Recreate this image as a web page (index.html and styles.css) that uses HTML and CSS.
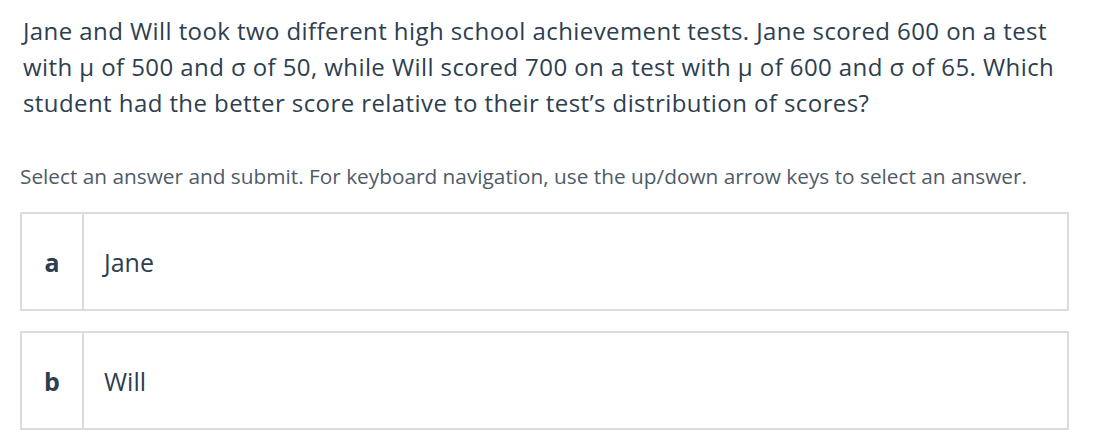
FILE: index.html
```html
<!DOCTYPE html>
<html>
<head>
<meta charset="utf-8">
<link rel="stylesheet" href="styles.css">
</head>
<body>
<div class="page">
  <p class="question">Jane and Will took two different high school achievement tests. Jane scored 600 on a test with μ of 500 and σ of 50, while Will scored 700 on a test with μ of 600 and σ of 65. Which student had the better score relative to their test’s distribution of scores?</p>
  <p class="hint">Select an answer and submit. For keyboard navigation, use the up/down arrow keys to select an answer.</p>
  <div class="choices">
    <div class="choice"><div class="letter">a</div><div class="label">Jane</div></div>
    <div class="choice"><div class="letter">b</div><div class="label">Will</div></div>
  </div>
</div>
</body>
</html>
```
FILE: styles.css
```css
html, body {
  margin: 0;
  padding: 0;
  background: #ffffff;
}
.page {
  padding: 13px 31px 0 20px;
  font-family: "Open Sans", "Noto Sans", sans-serif;
}
.question {
  margin: 0 0 0 3px;
  font-size: 24px;
  line-height: 36px;
  letter-spacing: 0.42px;
  color: #2d3e50;
}
.hint {
  margin: 42px 0 0 0;
  font-size: 20.8px;
  line-height: 26px;
  color: #4f5b68;
}
.choices {
  margin-top: 23px;
  display: flex;
  flex-direction: column;
  gap: 20px;
}
.choice {
  display: flex;
  height: 99px;
  box-sizing: border-box;
  border: 2px solid #d9dce0;
}
.letter {
  width: 60px;
  border-right: 2px solid #d9dce0;
  display: flex;
  align-items: center;
  justify-content: center;
  font-weight: 700;
  font-size: 25px;
  color: #2d3e50;
}
.label {
  display: flex;
  align-items: center;
  padding-left: 20px;
  font-size: 25px;
  color: #2d3e50;
}
```
